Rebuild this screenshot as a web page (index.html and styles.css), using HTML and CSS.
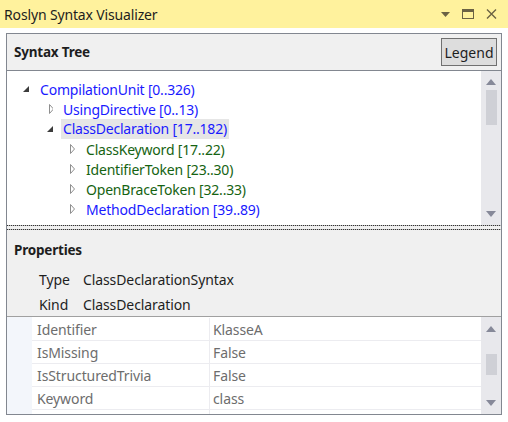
FILE: index.html
```html
<!DOCTYPE html>
<html lang="en">
<head>
  <meta charset="UTF-8" />
  <title>Roslyn Syntax Visualizer</title>
  <link rel="stylesheet" href="styles.css">
</head>
<body>
<div class="titlebar">
  <span class="title">Roslyn Syntax Visualizer</span>
  <div class="controls">
    <svg width="9" height="5" viewBox="0 0 9 5"><polygon points="0,0 9,0 4.5,5" fill="#6b6244"/></svg>
    <svg width="12" height="10" viewBox="0 0 12 10"><rect x="0.5" y="0.5" width="11" height="9" fill="none" stroke="#6b6244"/><rect x="0.5" y="0.5" width="11" height="2.5" fill="#6b6244"/></svg>
    <svg width="11" height="10" viewBox="0 0 11 10"><path d="M1 0.5 L10 9.5 M10 0.5 L1 9.5" stroke="#6b6244" stroke-width="1.4"/></svg>
  </div>
</div>

<div class="window">
  <div class="pane-head">
    <span class="head-label">Syntax Tree</span>
    <button class="legend">Legend</button>
  </div>

  <div class="tree">
    <div class="rows">
      <div class="row lvl0"><span class="tg"><svg width="10" height="10" viewBox="0 0 10 10"><polygon points="9,2 9,8 3,8" fill="#3c3c3c"/></svg></span><span class="node">CompilationUnit [0..326)</span></div>
      <div class="row lvl1"><span class="tg"><svg width="10" height="10" viewBox="0 0 10 10"><polygon points="6.5,0.5 10.5,5 6.5,9.5" fill="#fff" stroke="#8e8e8e"/></svg></span><span class="node">UsingDirective [0..13)</span></div>
      <div class="row lvl1"><span class="tg"><svg width="10" height="10" viewBox="0 0 10 10"><polygon points="10,2 10,8 4,8" fill="#3c3c3c"/></svg></span><span class="node sel">ClassDeclaration [17..182)</span></div>
      <div class="row lvl2"><span class="tg"><svg width="10" height="10" viewBox="0 0 10 10"><polygon points="4.5,0.5 8.5,5 4.5,9.5" fill="#fff" stroke="#8e8e8e"/></svg></span><span class="token">ClassKeyword [17..22)</span></div>
      <div class="row lvl2"><span class="tg"><svg width="10" height="10" viewBox="0 0 10 10"><polygon points="4.5,0.5 8.5,5 4.5,9.5" fill="#fff" stroke="#8e8e8e"/></svg></span><span class="token">IdentifierToken [23..30)</span></div>
      <div class="row lvl2"><span class="tg"><svg width="10" height="10" viewBox="0 0 10 10"><polygon points="4.5,0.5 8.5,5 4.5,9.5" fill="#fff" stroke="#8e8e8e"/></svg></span><span class="token">OpenBraceToken [32..33)</span></div>
      <div class="row lvl2"><span class="tg"><svg width="10" height="10" viewBox="0 0 10 10"><polygon points="4.5,0.5 8.5,5 4.5,9.5" fill="#fff" stroke="#8e8e8e"/></svg></span><span class="node">MethodDeclaration [39..89)</span></div>
    </div>
    <div class="vscroll tree-scroll">
      <svg width="10" height="6" viewBox="0 0 10 6"><polygon points="5,0 10,6 0,6" fill="#868999"/></svg>
      <div class="thumb"></div>
      <svg class="down" width="10" height="6" viewBox="0 0 10 6"><polygon points="0,0 10,0 5,6" fill="#868999"/></svg>
    </div>
  </div>

  <div class="splitter"></div>

  <div class="props-head">
    <div class="head-label">Properties</div>
    <div class="info">
      <span class="key">Type</span><span>ClassDeclarationSyntax</span>
      <span class="key">Kind</span><span>ClassDeclaration</span>
    </div>
  </div>

  <div class="grid">
    <div class="cells">
      <div class="prop"><span class="name">Identifier</span><span class="val">KlasseA</span></div>
      <div class="prop"><span class="name">IsMissing</span><span class="val">False</span></div>
      <div class="prop"><span class="name">IsStructuredTrivia</span><span class="val">False</span></div>
      <div class="prop"><span class="name">Keyword</span><span class="val">class</span></div>
      <div class="prop"><span class="name"></span><span class="val"></span></div>
    </div>
    <div class="vscroll grid-scroll">
      <svg width="10" height="6" viewBox="0 0 10 6"><polygon points="5,0 10,6 0,6" fill="#868999"/></svg>
      <div class="thumb"></div>
      <svg class="down" width="10" height="6" viewBox="0 0 10 6"><polygon points="0,0 10,0 5,6" fill="#868999"/></svg>
    </div>
  </div>
</div>
</body>
</html>
```

FILE: styles.css
```css
* { margin: 0; padding: 0; box-sizing: border-box; }
body {
  background: #fff;
  font-family: "Noto Sans", sans-serif;
  font-size: 14px;
  color: #1e1e1e;
}
.titlebar {
  height: 28px;
  background: #fff29d;
  display: flex;
  align-items: center;
  padding-left: 4px;
}
.title { font-size: 14px; letter-spacing: -0.15px; }
.controls {
  margin-left: auto;
  display: flex;
  align-items: center;
  gap: 12px;
  padding-right: 11px;
}
.window {
  margin: 5px 6px 0;
  border-left: 1px solid #828790;
  border-right: 1px solid #828790;
  border-bottom: 1px solid #828790;
}
.pane-head {
  height: 38px;
  border-top: 1px solid #828790;
  border-bottom: 1px solid #828790;
  background: #f0f0f0;
  display: flex;
  align-items: center;
  padding: 0 4px 0 7px;
}
.head-label { font-weight: bold; font-size: 13.5px; letter-spacing: -0.2px; }
.legend {
  margin-left: auto;
  width: 56px;
  height: 28px;
  background: #dddddd;
  border: 1px solid #707070;
  font-family: inherit;
  font-size: 14px;
  color: #1e1e1e;
}
.tree {
  height: 154px;
  display: flex;
  background: #fff;
}
.rows { flex: 1; padding-top: 8px; }
.row {
  height: 20px;
  display: flex;
  align-items: center;
  white-space: nowrap;
  letter-spacing: -0.2px;
}
.lvl0 { padding-left: 13px; }
.lvl1 { padding-left: 36px; }
.lvl2 { padding-left: 59px; }
.tg { width: 20px; display: flex; align-items: center; }
.node { color: #1a1aff; }
.token { color: #166312; }
.sel { background: #e6e6e6; margin-left: -2px; padding: 0 2px; line-height: 20px; }
.vscroll {
  width: 20px;
  background: #e8e8ec;
  display: flex;
  flex-direction: column;
  align-items: center;
}
.thumb { width: 11px; background: #cfd0d6; }
.tree-scroll { padding-top: 8px; }
.tree-scroll .thumb { height: 35px; margin-top: 5px; }
.vscroll .down { margin-top: auto; margin-bottom: 8px; }
.splitter {
  height: 6px;
  background:
    repeating-linear-gradient(90deg, #333 0 1px, #bbb 1px 2px) 0 0 / 100% 1px no-repeat,
    repeating-linear-gradient(90deg, #333 0 1px, #bbb 1px 2px) 0 4px / 100% 1px no-repeat,
    #f0f0f0;
}
.props-head {
  height: 86px;
  background: #f0f0f0;
  border-bottom: 1px solid #a0a0a0;
  padding: 10px 7px 0;
}
.info {
  display: grid;
  grid-template-columns: 44px auto;
  padding-left: 25px;
  margin-top: 8px;
  line-height: 25px;
  letter-spacing: -0.1px;
}
.grid {
  height: 97px;
  display: flex;
  overflow: hidden;
}
.cells {
  flex: 1;
  padding-left: 25px;
  padding-top: 1px;
  background: linear-gradient(90deg, #f3f6fb 0 25px, #fff 25px);
}
.prop {
  height: 23px;
  display: flex;
  align-items: center;
  border-bottom: 1px solid #ececf0;
  color: #6d6d6d;
  letter-spacing: -0.1px;
}
.name { width: 178px; padding-left: 5px; height: 100%; display: flex; align-items: center; border-right: 1px solid #ececf0; }
.val { padding-left: 3px; }
.grid-scroll { padding-top: 9px; }
.grid-scroll .thumb { height: 21px; margin-top: 22px; }
.grid-scroll .down { margin-bottom: 8px; }
```
